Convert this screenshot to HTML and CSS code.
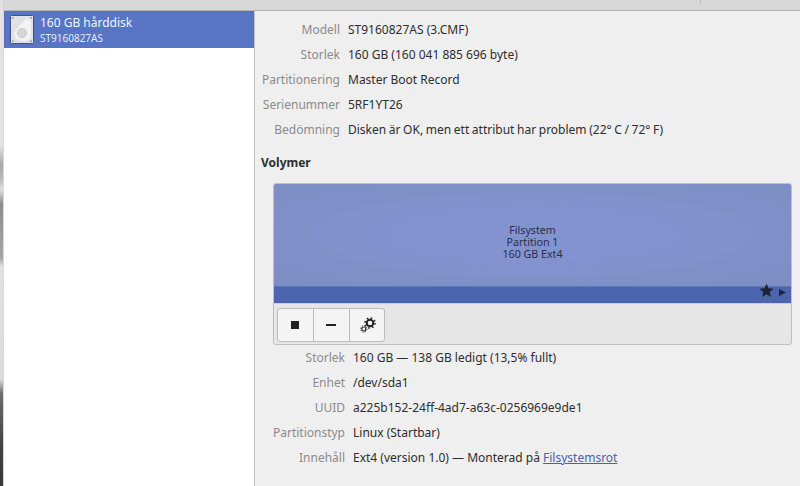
FILE: index.html
```html
<!DOCTYPE html>
<html lang="sv">
<head>
<meta charset="utf-8">
<title>Diskar</title>
<link rel="stylesheet" href="styles.css">
</head>
<body>
<div class="desktop">
  <div class="wallpaper"></div>
  <div class="window">
    <div class="titlebar"><span class="title-sep"></span></div>
    <div class="panes">
      <aside class="sidebar">
        <div class="drive">
          <svg class="drive-icon" width="24" height="29" viewBox="0 0 24 29">
            <rect x="0.5" y="0.5" width="23" height="28" rx="1" fill="#e0e1e6" stroke="#46527f"/>
            <path d="M5 16 L16 4 Q21 4 21 8 L21 21 Q20 26 12 26 Q4 25 4 18Z" fill="#f3f3f3"/>
            <circle cx="12" cy="18" r="4.500" fill="#d6d6d6" stroke="#c4c4c4"/>
            <g fill="#8a8d99">
              <rect x="2" y="2" width="1.500" height="1.500"/>
              <rect x="20.500" y="2" width="1.500" height="1.500"/>
              <rect x="2" y="25.500" width="1.500" height="1.500"/>
              <rect x="20.500" y="25.500" width="1.500" height="1.500"/>
            </g>
          </svg>
          <div class="drive-text">
            <div class="drive-name">160 GB hårddisk</div>
            <div class="drive-model">ST9160827AS</div>
          </div>
        </div>
      </aside>
      <main class="content">
        <dl class="props">
          <div class="row"><dt>Modell</dt><dd>ST9160827AS (3.CMF)</dd></div>
          <div class="row"><dt>Storlek</dt><dd>160 GB (160 041 885 696 byte)</dd></div>
          <div class="row"><dt>Partitionering</dt><dd>Master Boot Record</dd></div>
          <div class="row"><dt>Serienummer</dt><dd>5RF1YT26</dd></div>
          <div class="row"><dt>Bedömning</dt><dd class="tight">Disken är OK, men ett attribut har problem (22° C / 72° F)</dd></div>
        </dl>
        <h2 class="section">Volymer</h2>
        <div class="volume">
          <div class="partition">
            <div class="partition-main">
              <div>Filsystem</div>
              <div>Partition 1</div>
              <div>160 GB Ext4</div>
            </div>
            <div class="partition-bar">
              <svg class="star" width="15" height="15" viewBox="0 0 16 16"><path d="M8 .6 10.1 5.7 15.6 6.1 11.4 9.6 12.7 15 8 12.1 3.3 15 4.600 9.600 .4 6.100 5.900 5.700Z" fill="#1f2335"/></svg>
              <svg class="arrow" width="7" height="7" viewBox="0 0 7 7"><path d="M0 0 7 3.500 0 7Z" fill="#1f2335"/></svg>
            </div>
          </div>
          <div class="toolbar">
            <div class="btn-group">
              <button class="btn stop"><svg width="8" height="8" viewBox="0 0 8 8"><rect width="8" height="8" fill="#222"/></svg></button>
              <button class="btn stop"><svg width="10" height="2" viewBox="0 0 10 2"><rect width="10" height="2" fill="#222"/></svg></button>
              <button class="btn gear">
                <svg width="16" height="16" viewBox="0 0 16 16">
                  <circle cx="10" cy="6" r="3.300" fill="none" stroke="#222" stroke-width="2"/>
                  <circle cx="10" cy="6" r="5" fill="none" stroke="#222" stroke-width="1.600" stroke-dasharray="1.600 2.330"/>
                  <circle cx="3.800" cy="12" r="2" fill="none" stroke="#333" stroke-width="1.200"/>
                  <circle cx="3.800" cy="12" r="3.200" fill="none" stroke="#333" stroke-width="1" stroke-dasharray="1.200 1.310"/>
                </svg>
              </button>
            </div>
          </div>
        </div>
        <dl class="props vol-props">
          <div class="row"><dt>Storlek</dt><dd>160 GB — 138 GB ledigt (13,5% fullt)</dd></div>
          <div class="row"><dt>Enhet</dt><dd>/dev/sda1</dd></div>
          <div class="row"><dt>UUID</dt><dd>a225b152-24ff-4ad7-a63c-0256969e9de1</dd></div>
          <div class="row"><dt>Partitionstyp</dt><dd>Linux (Startbar)</dd></div>
          <div class="row"><dt>Innehåll</dt><dd>Ext4 (version 1.0) — Monterad på <a href="#">Filsystemsrot</a></dd></div>
        </dl>
      </main>
    </div>
  </div>
</div>
</body>
</html>
```
FILE: styles.css
```css
* { box-sizing: border-box; }
html, body { margin: 0; padding: 0; }
body { width: 800px; height: 486px; overflow: hidden; font-family: "Noto Sans", sans-serif; font-size: 12px; color: #2e2e2e; }
.desktop { display: flex; height: 486px; }
.wallpaper {
  width: 4px; flex: none;
  border-right: 1px solid #d8d8d8;
  background: linear-gradient(180deg, #e4e3df 0, #e4e3df 30%, #a9a79f 34%, #bdbcb4 37%, #e0dfda 39%, #8e8b84 42%, #a8a69f 53%, #e3e2dd 55%, #dcdbd5 78%, #6f6c66 81%, #45423d 92%, #3b3833 100%);
}
.window { flex: 1; display: flex; flex-direction: column; min-width: 0; }
.titlebar { height: 11px; flex: none; background: #d8d8d8; border-bottom: 1px solid #b6b6b6; position: relative; }
.title-sep { position: absolute; left: 696px; top: 0; width: 1px; height: 4px; background: #bdbdbd; }
.panes { flex: 1; display: flex; min-height: 0; }
.sidebar { width: 251px; flex: none; background: #fff; border-right: 1px solid #c4c4c4; }
.drive { height: 37px; background: #5874c4; display: flex; align-items: center; padding: 0 0 0 6px; gap: 6px; color: #fff; }
.drive-icon { flex: none; }
.drive-text { display: flex; flex-direction: column; }
.drive-name { font-size: 12px; line-height: 16px; color: #f2f4fb; }
.drive-model { font-size: 10px; line-height: 14px; color: #e6eaf6; }
.content { flex: 1; background: #efefef; padding: 6px 8px 0 6px; min-width: 0; }
.props { margin: 0; }
.row { display: flex; height: 25px; align-items: center; }
.row dt { width: 79px; text-align: right; color: #8b8b8b; flex: none; white-space: nowrap; }
.row dd { margin: 0 0 0 8px; color: #2e2e2e; white-space: nowrap; }
.row dd.tight { word-spacing: -0.5px; }
.section { margin: 12px 0 0; font-size: 12px; font-weight: 700; line-height: 17px; color: #2e2e2e; }
.volume { margin: 12px 0 0 12px; height: 162px; background: #e6e6e6; border: 1px solid #c0c0c0; border-radius: 3px; overflow: hidden; }
.partition { height: 119px; display: flex; flex-direction: column; }
.partition-main { flex: 1; display: flex; flex-direction: column; justify-content: center; align-items: center; font-size: 10.67px; line-height: 12px; color: #2b2e4a; background: radial-gradient(ellipse at center, #8293d0 30%, #7d8ec3 100%); padding-top: 13px; }
.partition-bar { height: 17px; background: #4c65b0; border-top: 1px solid #5f76b8; display: flex; align-items: flex-start; justify-content: flex-end; padding-right: 5px; overflow: visible; }
.star { margin-top: -4px; margin-right: 5px; flex: none; }
.arrow { margin-top: 2px; flex: none; }
.toolbar { padding: 4px 3px; border-top: 1px solid #cfcfcf; }
.btn-group { display: inline-flex; background: #f4f4f4; border: 1px solid #bcbcbc; border-radius: 3px; height: 34px; }
.btn { width: 36px; padding: 0; border: 0; border-right: 1px solid #bcbcbc; background: transparent; display: flex; align-items: center; justify-content: center; }
.btn.stop { padding-right: 1px; }
.btn.gear { border-right: 0; width: 34px; padding-left: 1px; }
.vol-props { margin-top: 0; }
.vol-props .row dt { width: 84px; }
.vol-props .row { height: 25px; }
a { color: #4a5fb0; text-decoration: underline; }
```
